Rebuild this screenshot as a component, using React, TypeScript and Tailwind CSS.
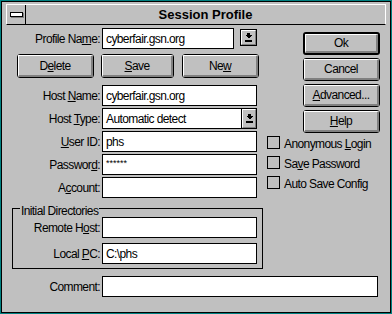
import React from 'react';

const font = "font-['Liberation_Sans',Arial,sans-serif]";
const txt = 'text-[12px] tracking-[-0.6px] text-black';

// Win 3.1 push button
const Btn = ({ children, def, className = '' }: { children: React.ReactNode; def?: boolean; className?: string }) => (
  <div className={`${def ? 'border-2' : 'border'} border-black rounded-[3px] bg-[#c0c0c0] ${className}`}>
    <div className={`h-full flex items-center justify-center border-t border-l border-white border-r-2 border-b-2 border-r-[#808080] border-b-[#808080] rounded-[1px] ${txt}`}>
      {children}
    </div>
  </div>
);

const ArrowGlyph = () => (
  <svg width="7" height="9" viewBox="0 0 7 9" shapeRendering="crispEdges">
    <rect x="2" y="0" width="3" height="2" fill="#000" />
    <polygon points="0,2 7,2 3.5,5.5" fill="#000" />
    <rect x="0" y="7" width="7" height="1.5" fill="#000" />
  </svg>
);

const Edit = ({ value, className = '' }: { value?: React.ReactNode; className?: string }) => (
  <div className={`h-[21px] border border-black bg-white flex items-center pl-[3px] ${txt} ${className}`}>
    {value}
  </div>
);

const Row = ({ label, children, lw = 'w-[96px]', className = '' }: { label: React.ReactNode; children: React.ReactNode; lw?: string; className?: string }) => (
  <div className={`flex items-center h-[21px] ${className}`}>
    <div className={`${lw} shrink-0 text-right pr-[2px] ${txt}`}>{label}</div>
    {children}
  </div>
);

const Check = ({ label }: { label: React.ReactNode }) => (
  <div className="flex items-start h-[20px]">
    <div className="w-[13px] h-[13px] border border-black bg-[#c0c0c0] shrink-0" />
    <span className={`ml-[4px] -mt-[1px] whitespace-nowrap ${txt}`}>{label}</span>
  </div>
);

export default function App() {
  return (
    <div className={`w-[392px] h-[314px] border border-[#008080] ${font}`}>
      <div className="h-full border border-black bg-[#c0c0c0] px-[4px] pt-[2px] flex flex-col">
        {/* title bar */}
        <div className="h-[21px] flex border-t border-l border-r border-white border-b border-b-black shrink-0">
          <div className="w-[19px] border-r border-black flex items-center justify-center">
            <div className="w-[13px] h-[5px] border border-black bg-white shadow-[1px_1px_0_#808080]" />
          </div>
          <div className="flex-1 flex items-center justify-center text-[13px] font-bold text-black">
            Session Profile
          </div>
        </div>

        {/* upper part */}
        <div className="flex">
          <div className="w-[256px] shrink-0 flex flex-col">
            <Row label={<>Profile Na<u>m</u>e:</>} className="mt-[3px]">
              <Edit value="cyberfair.gsn.org" className="w-[132px]" />
              <div className="ml-[6px] self-start mt-[1px] w-[17px] h-[17px] border border-black">
                <div className="h-full flex items-center justify-center border-t border-l border-white border-r border-b border-r-[#808080] border-b-[#808080]">
                  <ArrowGlyph />
                </div>
              </div>
            </Row>
            <div className="flex mt-[5px] h-[24px]">
              <Btn className="ml-[11px] w-[77px]">D<u>e</u>lete</Btn>
              <Btn className="ml-[7px] w-[73px]"><u>S</u>ave</Btn>
              <Btn className="ml-[8px] w-[77px]">Ne<u>w</u></Btn>
            </div>
            <Row label={<>Host <u>N</u>ame:</>} className="mt-[7px]">
              <Edit value="cyberfair.gsn.org" className="w-[155px]" />
            </Row>
            <Row label={<>Host <u>T</u>ype:</>} className="mt-[2px]">
              <div className="w-[155px] h-[21px] border border-black bg-white flex">
                <div className={`flex-1 flex items-center pl-[3px] ${txt}`}>Automatic detect</div>
                <div className="w-[15px] border-l border-black bg-[#c0c0c0]">
                  <div className="h-full flex items-center justify-center border-t border-l border-white border-r border-b border-r-[#808080] border-b-[#808080]">
                    <ArrowGlyph />
                  </div>
                </div>
              </div>
            </Row>
            <Row label={<><u>U</u>ser ID:</>} className="mt-[2px]">
              <Edit value="phs" className="w-[155px]" />
            </Row>
            <Row label={<>Passwor<u>d</u>:</>} className="mt-[2px]">
              <Edit value={<span className="text-[9px] tracking-[0px] self-start mt-[2px]">******</span>} className="w-[155px]" />
            </Row>
            <Row label={<>A<u>c</u>count:</>} className="mt-[2px]">
              <Edit className="w-[155px]" />
            </Row>
          </div>

          <div className="flex-1 flex flex-col">
            <div className="ml-[41px] mt-[7px] flex flex-col gap-[3px]">
              <Btn def className="w-[77px] h-[23px]">Ok</Btn>
              <Btn className="w-[77px] h-[23px]">Cancel</Btn>
              <Btn className="w-[77px] h-[23px]"><u>A</u>dvanced...</Btn>
              <Btn className="w-[77px] h-[23px]"><u>H</u>elp</Btn>
            </div>
            <div className="ml-[5px] mt-[3px] flex flex-col">
              <Check label={<>Anonymous <u>L</u>ogin</>} />
              <Check label={<>Sa<u>v</u>e Password</>} />
              <Check label="Auto Save Config" />
            </div>
          </div>
        </div>

        {/* group box */}
        <div className="relative ml-[6px] mt-[10px] w-[251px] h-[61px] border border-black">
          <span className={`absolute -top-[5px] left-[7px] px-[1px] bg-[#c0c0c0] leading-[14px] ${txt}`}>
            Initial Directories
          </span>
          <Row label={<>Remote H<u>o</u>st:</>} lw="w-[89px]" className="mt-[8px]">
            <Edit className="w-[155px]" />
          </Row>
          <Row label={<>Local <u>P</u>C:</>} lw="w-[89px]" className="mt-[5px]">
            <Edit value="C:\phs" className="w-[155px]" />
          </Row>
        </div>

        <Row label="Comment:" className="mt-[7px]">
          <Edit className="w-[276px]" />
        </Row>
      </div>
    </div>
  );
}
